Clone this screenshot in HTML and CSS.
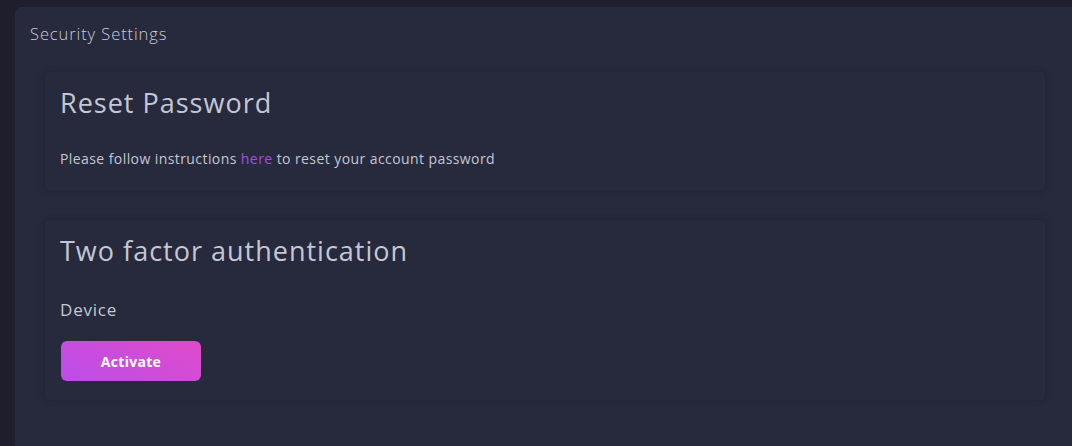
FILE: index.html
```html
<!DOCTYPE html>
<html>
<head>
<meta charset="utf-8">
<link rel="stylesheet" href="styles.css">
</head>
<body>
<div class="page">
  <div class="panel">
    <div class="panel-title">Security Settings</div>
    <div class="panel-body">
      <section class="card card-reset">
        <h2 class="card-heading">Reset Password</h2>
        <p class="card-text">Please follow instructions <a class="link" href="#">here</a> to reset your account password</p>
      </section>
      <section class="card card-2fa">
        <h2 class="card-heading">Two factor authentication</h2>
        <div class="label">Device</div>
        <button class="btn">Activate</button>
      </section>
    </div>
  </div>
</div>
</body>
</html>
```
FILE: styles.css
```css
html, body {
  margin: 0;
  padding: 0;
  height: 100%;
  background: #1e1e2c;
  font-family: "Open Sans", "Liberation Sans", sans-serif;
  overflow: hidden;
}
.page {
  padding: 7px 0 0 15px;
  height: 100%;
  box-sizing: border-box;
}
.panel {
  background: #272a3d;
  border-top-left-radius: 6px;
  height: 100%;
  box-sizing: border-box;
}
.panel-title {
  padding: 16px 0 0 15px;
  height: 22px;
  font-size: 16.5px;
  font-weight: 300;
  letter-spacing: 0.9px;
  color: #c9ccda;
  line-height: 22px;
}
.panel-body {
  padding: 27px 27px 0 30px;
  display: flex;
  flex-direction: column;
  gap: 30px;
}
.card {
  background: #272a3d;
  border-radius: 4px;
  box-shadow: 0 0 6px rgba(20, 20, 32, 0.45);
  padding: 0 15px;
}
.card-reset {
  height: 118px;
  padding-top: 13px;
  box-sizing: border-box;
}
.card-2fa {
  height: 180px;
  padding-top: 13px;
  box-sizing: border-box;
}
.card-heading {
  margin: 0;
  font-size: 27px;
  font-weight: 400;
  letter-spacing: 1px;
  color: #c4c7d4;
  line-height: 36px;
}
.card-text {
  margin: 28px 0 0;
  font-size: 14px;
  letter-spacing: 0.42px;
  color: #c4c7d4;
  line-height: 20px;
}
.link {
  color: #a54be6;
  text-decoration: none;
}
.label {
  margin-top: 29px;
  font-size: 17px;
  letter-spacing: 0.8px;
  color: #c4c7d4;
  line-height: 24px;
}
.btn {
  margin: 19px 0 0 1px;
  width: 140px;
  height: 40px;
  border: none;
  border-radius: 6px;
  background: linear-gradient(30deg, #bb4ee9 0%, #df4bca 100%);
  color: #ffffff;
  font-family: "Open Sans", "Liberation Sans", sans-serif;
  font-weight: 700;
  font-size: 14px;
  letter-spacing: 0.3px;
  display: block;
}
```
